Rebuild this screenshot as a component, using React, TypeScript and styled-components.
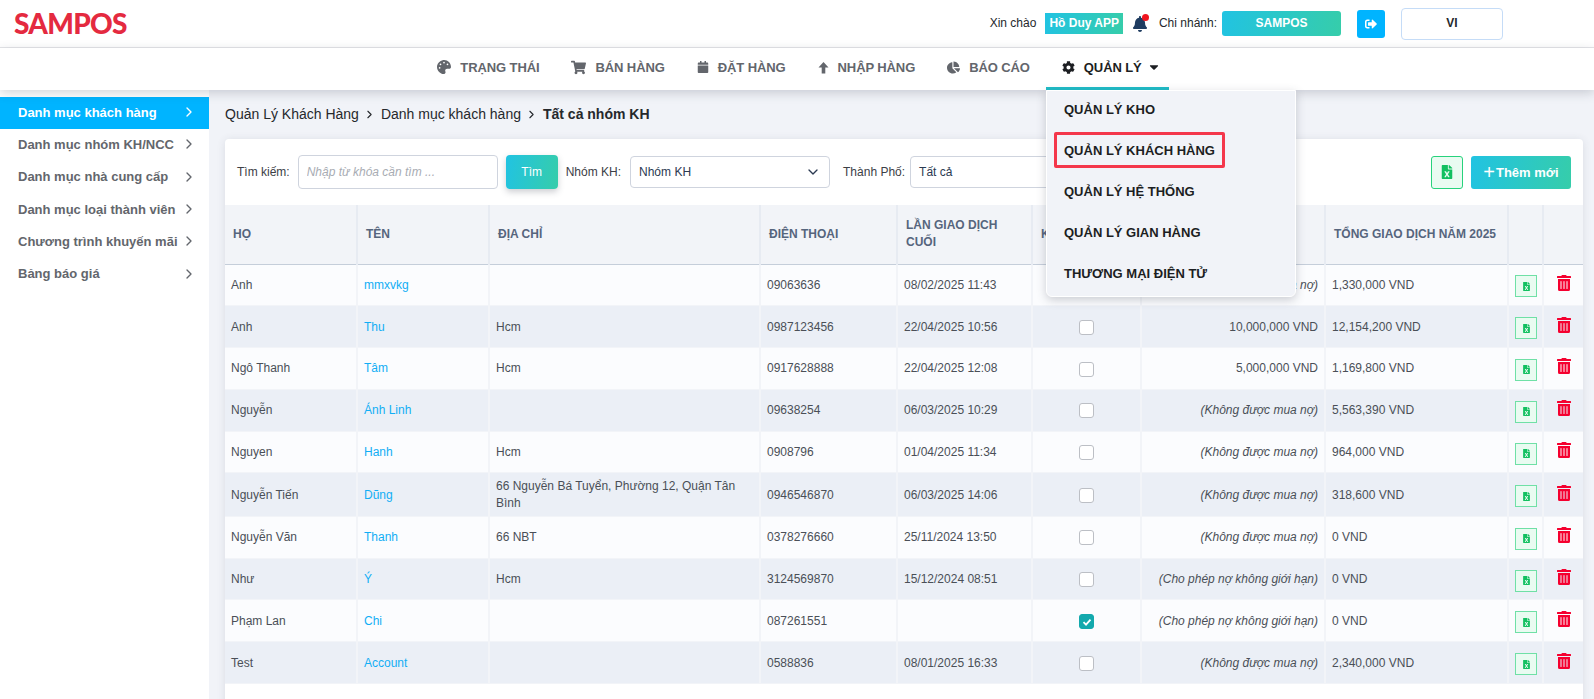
import React from 'react';
import styled, { createGlobalStyle, css } from 'styled-components';
import {
  FaPalette,
  FaShoppingCart,
  FaCalendar,
  FaChartPie,
  FaCog,
  FaCaretDown,
  FaBell,
  FaSignOutAlt,
  FaFileExcel,
  FaTrashAlt,
} from 'react-icons/fa';
import { ChevronRight, ChevronDown } from 'lucide-react';

const gradient = 'linear-gradient(100deg, #21c3e2 0%, #36cdaa 100%)';

const GlobalStyle = createGlobalStyle`
  html, body {
    margin: 0;
    height: 100%;
    overflow: hidden;
    background: #f1f3f8;
    font-family: "Liberation Sans", Arial, sans-serif;
    color: #3f4650;
  }
  * { box-sizing: border-box; }
`;

const Page = styled.div`
  height: 699px;
  display: flex;
  flex-direction: column;
  overflow: hidden;
`;

const TopBar = styled.header`
  height: 48px;
  flex: none;
  background: #fff;
  border-bottom: 1px solid #e4e5e8;
  display: flex;
  align-items: center;
  padding: 0 91px 0 14px;
`;

const Logo = styled.div`
  font-family: Lato, sans-serif;
  font-weight: 900;
  font-size: 28px;
  letter-spacing: -0.7px;
  color: #e42a40;
  margin: 0 auto 2px 0;
`;

const TopText = styled.span`
  font-size: 12px;
  color: #25282c;
  margin-bottom: 1px;
`;

const UserBadge = styled.span`
  margin: 0 9px 0 9px;
  height: 21px;
  padding: 0 4px 1px;
  display: flex;
  align-items: center;
  background: ${gradient};
  color: #fff;
  font-size: 12px;
  font-weight: 700;
`;

const BellBox = styled.span`
  position: relative;
  display: flex;
  margin-right: 11px;
  color: #1f3c60;
  font-size: 16px;
`;

const BellDot = styled.span`
  position: absolute;
  top: -2px;
  right: -1px;
  width: 7px;
  height: 7px;
  border-radius: 50%;
  background: #f0141e;
`;

const BranchButton = styled.div`
  margin: 0 16px 0 5px;
  width: 119px;
  height: 25px;
  padding-bottom: 1px;
  border-radius: 3px;
  background: ${gradient};
  color: #fff;
  font-size: 12px;
  font-weight: 700;
  display: flex;
  align-items: center;
  justify-content: center;
`;

const LogoutButton = styled.div`
  width: 28px;
  height: 28px;
  margin-right: 16px;
  border-radius: 3px;
  background: #00b4ff;
  color: #fff;
  font-size: 12px;
  display: flex;
  align-items: center;
  justify-content: center;
`;

const LangButton = styled.div`
  width: 102px;
  height: 32px;
  padding-bottom: 1px;
  border: 1px solid #c5dcf7;
  border-radius: 4px;
  font-size: 12px;
  font-weight: 700;
  color: #25282c;
  display: flex;
  align-items: center;
  justify-content: center;
`;

const NavBar = styled.nav`
  position: relative;
  z-index: 3;
  height: 42px;
  flex: none;
  padding-right: 4px;
  background: #fff;
  box-shadow: 0 3px 10px rgba(60, 64, 80, 0.22);
  display: flex;
  justify-content: center;
`;

const NavItem = styled.div<{ $active?: boolean }>`
  position: relative;
  height: 42px;
  padding: 0 16px 4px;
  display: flex;
  align-items: center;
  gap: 9px;
  white-space: nowrap;
  font-size: 13px;
  font-weight: 700;
  letter-spacing: -0.1px;
  color: ${p => (p.$active ? '#1c1e22' : '#63666c')};
  ${p =>
    p.$active &&
    css`
      padding: 0 8px 1px 16px;
      border-bottom: 3px solid #20bcc6;
    `}
`;

const NavIcon = styled.span<{ $size?: number }>`
  display: flex;
  font-size: ${p => p.$size ?? 14}px;
`;

const CaretIcon = styled(NavIcon)`
  margin-left: -4px;
`;

const Dropdown = styled.div`
  position: absolute;
  top: 42px;
  left: 1046px;
  width: 250px;
  background: #f1f3f8;
  border-radius: 0 0 6px 6px;
  border: 1px solid #fff;
  box-shadow: 0 3px 10px rgba(60, 64, 80, 0.25);
`;

const DropdownItem = styled.div`
  height: 41px;
  padding: 0 0 5px 17px;
  display: flex;
  align-items: center;
  font-size: 13px;
  font-weight: 700;
  color: #1c1e22;
`;

const DropdownLabel = styled.span<{ $marked?: boolean }>`
  position: relative;
  ${p =>
    p.$marked &&
    css`
      &::after {
        content: '';
        position: absolute;
        inset: -11px -10px -10px -10px;
        border: 3px solid #f4374b;
        border-radius: 2px;
      }
    `}
`;

const Body = styled.div`
  flex: 1;
  min-height: 0;
  display: flex;
`;

const SideBar = styled.aside`
  width: 209px;
  flex: none;
  background: #fff;
  padding-top: 7px;
`;

const SideItem = styled.div<{ $active?: boolean }>`
  height: 32.3px;
  padding: 0 12px 2px 18px;
  display: flex;
  align-items: center;
  justify-content: space-between;
  font-size: 13px;
  font-weight: 700;
  color: ${p => (p.$active ? '#fff' : '#63666c')};
  background: ${p => (p.$active ? '#00b4ff' : 'transparent')};
`;

const Main = styled.main`
  flex: 1;
  min-width: 0;
  padding: 8px 11px 0 16px;
`;

const Breadcrumb = styled.div`
  height: 32px;
  display: flex;
  align-items: center;
  gap: 4.5px;
  font-size: 14px;
  color: #25282c;
  margin-bottom: 9px;
`;

const CrumbCurrent = styled.strong`
  font-weight: 700;
`;

const Card = styled.section`
  height: 600px;
  background: #fff;
  border-radius: 4px 4px 0 0;
  box-shadow: 0 1px 8px rgba(60, 64, 80, 0.12);
`;

const Toolbar = styled.div`
  height: 66px;
  padding: 0 12px;
  display: flex;
  align-items: center;
  font-size: 12px;
  color: #3c4046;
`;

const FilterLabel = styled.label`
  white-space: nowrap;
`;

const SearchInput = styled.input`
  width: 200px;
  height: 34px;
  margin: 0 8px;
  padding: 0 8px;
  border: 1px solid #cfd4de;
  border-radius: 4px;
  outline: none;
  font: inherit;
  &::placeholder {
    font-style: italic;
    color: #a8acb3;
  }
`;

const SearchButton = styled.button`
  width: 52px;
  height: 34px;
  margin-right: 8px;
  border: 0;
  border-radius: 4px;
  background: ${gradient};
  color: #fff;
  font: inherit;
  box-shadow: 0 3px 6px rgba(60, 64, 80, 0.25);
`;

const SelectBox = styled.div<{ $gap: number }>`
  width: 200px;
  height: 32px;
  margin: 0 13px 0 ${p => p.$gap}px;
  padding: 0 8px;
  border: 1px solid #cfd4de;
  border-radius: 4px;
  display: flex;
  align-items: center;
  justify-content: space-between;
  color: #2b3a52;
`;

const ExcelButton = styled.div`
  margin-left: auto;
  width: 32px;
  height: 33px;
  border: 1px solid #27d27c;
  border-radius: 3px;
  background: #e9fbf1;
  color: #12c060;
  font-size: 14px;
  display: flex;
  align-items: center;
  justify-content: center;
`;

const AddButton = styled.div`
  width: 100px;
  height: 33px;
  margin-left: 8px;
  border-radius: 3px;
  background: ${gradient};
  color: #fff;
  font-size: 13px;
  font-weight: 700;
  display: flex;
  align-items: center;
  justify-content: center;
  gap: 1px;
`;

const PlusSign = styled.span`
  font-size: 20px;
  font-weight: 400;
  line-height: 1;
`;

const Table = styled.table`
  width: 1358px;
  table-layout: fixed;
  border-collapse: collapse;
  font-size: 12px;
`;

const HeadCell = styled.th`
  height: 59px;
  padding: 0 8px;
  text-align: left;
  font-size: 12px;
  font-weight: 700;
  line-height: 1.4;
  color: #56657d;
  background: #f2f4f8;
  border-left: 2px solid #e7ebf2;
  border-bottom: 1px solid #c5ceda;
  &:first-child {
    border-left: 0;
  }
`;

const Row = styled.tr<{ $even: boolean }>`
  background: ${p => (p.$even ? '#ebeff6' : '#fbfcfe')};
`;

const Cell = styled.td<{ $align?: 'right' | 'center' }>`
  height: 41.8px;
  padding: 5px 6px;
  line-height: 1.35;
  text-align: ${p => p.$align ?? 'left'};
  color: #4a4f57;
  border-left: 2px solid #f2f4f8;
  border-bottom: 1px solid #f2f4f8;
  &:first-child {
    border-left: 0;
  }
`;

const NameLink = styled.a`
  color: #11aef5;
`;

const DebtNote = styled.em`
  color: #4a4f57;
`;

const CheckBox = styled.span<{ $checked?: boolean }>`
  display: inline-flex;
  align-items: center;
  justify-content: center;
  vertical-align: middle;
  width: 15px;
  height: 15px;
  border-radius: 3px;
  border: 1px solid ${p => (p.$checked ? '#13a9ad' : '#bcbfc5')};
  background: ${p => (p.$checked ? '#13a9ad' : '#fff')};
`;

const RowExcel = styled.span`
  display: inline-flex;
  align-items: center;
  justify-content: center;
  vertical-align: middle;
  width: 22px;
  height: 22px;
  margin-top: 3px;
  border: 1px solid #6fe0a6;
  background: #e9fbf1;
  color: #12c060;
  font-size: 9px;
`;

const TrashIcon = styled(FaTrashAlt)`
  display: block;
  margin: 0 auto 4px;
  font-size: 16px;
  color: #f5002f;
`;

// mũi tên nhập hàng: đầu tam giác, thân dày
const ImportArrow = () => (
  <svg width="11" height="13" viewBox="0 0 11 13">
    <path d="M5.5 1 10.5 6.5H7.3V12.5H3.7V6.5H.5Z" fill="currentColor" />
  </svg>
);

const navItems = [
  { label: 'TRẠNG THÁI', icon: <FaPalette />, size: 14 },
  { label: 'BÁN HÀNG', icon: <FaShoppingCart />, size: 15 },
  { label: 'ĐẶT HÀNG', icon: <FaCalendar />, size: 12 },
  { label: 'NHẬP HÀNG', icon: <ImportArrow />, size: 11 },
  { label: 'BÁO CÁO', icon: <FaChartPie />, size: 13 },
];

const sideItems = [
  'Danh mục khách hàng',
  'Danh mục nhóm KH/NCC',
  'Danh mục nhà cung cấp',
  'Danh mục loại thành viên',
  'Chương trình khuyến mãi',
  'Bảng báo giá',
];

const menuItems = ['QUẢN LÝ KHO', 'QUẢN LÝ KHÁCH HÀNG', 'QUẢN LÝ HỆ THỐNG', 'QUẢN LÝ GIAN HÀNG', 'THƯƠNG MẠI ĐIỆN TỬ'];

const columns = [
  { label: 'HỌ', width: 132 },
  { label: 'TÊN', width: 132 },
  { label: 'ĐỊA CHỈ', width: 271 },
  { label: 'ĐIỆN THOẠI', width: 137 },
  { label: 'LẦN GIAO DỊCH CUỐI', width: 135 },
  { label: 'KHÓA', width: 109 },
  { label: '', width: 184 },
  { label: 'TỔNG GIAO DỊCH NĂM 2025', width: 183 },
  { label: '', width: 35 },
  { label: '', width: 40 },
];

const NO_DEBT = '(Không được mua nợ)';
const UNLIMITED = '(Cho phép nợ không giới hạn)';

const customers = [
  { last: 'Anh', first: 'mmxvkg', address: '', phone: '09063636', date: '08/02/2025 11:43', limit: NO_DEBT, total: '1,330,000 VND' },
  { last: 'Anh', first: 'Thu', address: 'Hcm', phone: '0987123456', date: '22/04/2025 10:56', limit: '10,000,000 VND', total: '12,154,200 VND' },
  { last: 'Ngô Thanh', first: 'Tâm', address: 'Hcm', phone: '0917628888', date: '22/04/2025 12:08', limit: '5,000,000 VND', total: '1,169,800 VND' },
  { last: 'Nguyễn', first: 'Ánh Linh', address: '', phone: '09638254', date: '06/03/2025 10:29', limit: NO_DEBT, total: '5,563,390 VND' },
  { last: 'Nguyen', first: 'Hanh', address: 'Hcm', phone: '0908796', date: '01/04/2025 11:34', limit: NO_DEBT, total: '964,000 VND' },
  { last: 'Nguyễn Tiến', first: 'Dũng', address: '66 Nguyễn Bá Tuyển, Phường 12, Quận Tân Bình', phone: '0946546870', date: '06/03/2025 14:06', limit: NO_DEBT, total: '318,600 VND' },
  { last: 'Nguyễn Văn', first: 'Thanh', address: '66 NBT', phone: '0378276660', date: '25/11/2024 13:50', limit: NO_DEBT, total: '0 VND' },
  { last: 'Như', first: 'Ý', address: 'Hcm', phone: '3124569870', date: '15/12/2024 08:51', limit: UNLIMITED, total: '0 VND' },
  { last: 'Phạm Lan', first: 'Chi', address: '', phone: '087261551', date: '', limit: UNLIMITED, total: '0 VND', checked: true },
  { last: 'Test', first: 'Account', address: '', phone: '0588836', date: '08/01/2025 16:33', limit: NO_DEBT, total: '2,340,000 VND' },
];

const App: React.FC = () => {
  return (
    <Page>
      <GlobalStyle />
      <TopBar>
        <Logo>SAMPOS</Logo>
        <TopText>Xin chào</TopText>
        <UserBadge>Hồ Duy APP</UserBadge>
        <BellBox>
          <FaBell />
          <BellDot />
        </BellBox>
        <TopText>Chi nhánh:</TopText>
        <BranchButton>SAMPOS</BranchButton>
        <LogoutButton>
          <FaSignOutAlt />
        </LogoutButton>
        <LangButton>VI</LangButton>
      </TopBar>

      <NavBar>
        {navItems.map(item => (
          <NavItem key={item.label}>
            <NavIcon $size={item.size}>{item.icon}</NavIcon>
            {item.label}
          </NavItem>
        ))}
        <NavItem $active>
          <NavIcon $size={13}>
            <FaCog />
          </NavIcon>
          QUẢN LÝ
          <CaretIcon>
            <FaCaretDown />
          </CaretIcon>
        </NavItem>
        <Dropdown>
          {menuItems.map(item => (
            <DropdownItem key={item}>
              <DropdownLabel $marked={item === 'QUẢN LÝ KHÁCH HÀNG'}>{item}</DropdownLabel>
            </DropdownItem>
          ))}
        </Dropdown>
      </NavBar>

      <Body>
        <SideBar>
          {sideItems.map((item, i) => (
            <SideItem key={item} $active={i === 0}>
              {item}
              <ChevronRight size={16} />
            </SideItem>
          ))}
        </SideBar>

        <Main>
          <Breadcrumb>
            Quản Lý Khách Hàng
            <ChevronRight size={13} />
            Danh mục khách hàng
            <ChevronRight size={13} />
            <CrumbCurrent>Tất cả nhóm KH</CrumbCurrent>
          </Breadcrumb>

          <Card>
            <Toolbar>
              <FilterLabel>Tìm kiếm:</FilterLabel>
              <SearchInput placeholder="Nhập từ khóa cần tìm ..." />
              <SearchButton>Tìm</SearchButton>
              <FilterLabel>Nhóm KH:</FilterLabel>
              <SelectBox $gap={9}>
                Nhóm KH
                <ChevronDown size={16} />
              </SelectBox>
              <FilterLabel>Thành Phố:</FilterLabel>
              <SelectBox $gap={5}>Tất cả</SelectBox>
              <ExcelButton>
                <FaFileExcel />
              </ExcelButton>
              <AddButton>
                <PlusSign>+</PlusSign>Thêm mới
              </AddButton>
            </Toolbar>

            <Table>
              <colgroup>
                {columns.map((c, i) => (
                  <col key={i} width={c.width} />
                ))}
              </colgroup>
              <thead>
                <tr>
                  {columns.map((c, i) => (
                    <HeadCell key={i}>{c.label}</HeadCell>
                  ))}
                </tr>
              </thead>
              <tbody>
                {customers.map((c, i) => (
                  <Row key={i} $even={i % 2 === 1}>
                    <Cell>{c.last}</Cell>
                    <Cell>
                      <NameLink>{c.first}</NameLink>
                    </Cell>
                    <Cell>{c.address}</Cell>
                    <Cell>{c.phone}</Cell>
                    <Cell>{c.date}</Cell>
                    <Cell $align="center">
                      <CheckBox $checked={c.checked}>
                        {c.checked && (
                          <svg width="10" height="10" viewBox="0 0 10 10">
                            <path d="M1.5 5.2 4 7.6 8.5 2.6" fill="none" stroke="#fff" strokeWidth="1.8" />
                          </svg>
                        )}
                      </CheckBox>
                    </Cell>
                    <Cell $align="right">{c.limit.startsWith('(') ? <DebtNote>{c.limit}</DebtNote> : c.limit}</Cell>
                    <Cell>{c.total}</Cell>
                    <Cell $align="center">
                      <RowExcel>
                        <FaFileExcel />
                      </RowExcel>
                    </Cell>
                    <Cell $align="center">
                      <TrashIcon />
                    </Cell>
                  </Row>
                ))}
              </tbody>
            </Table>
          </Card>
        </Main>
      </Body>
    </Page>
  );
};

export default App;
